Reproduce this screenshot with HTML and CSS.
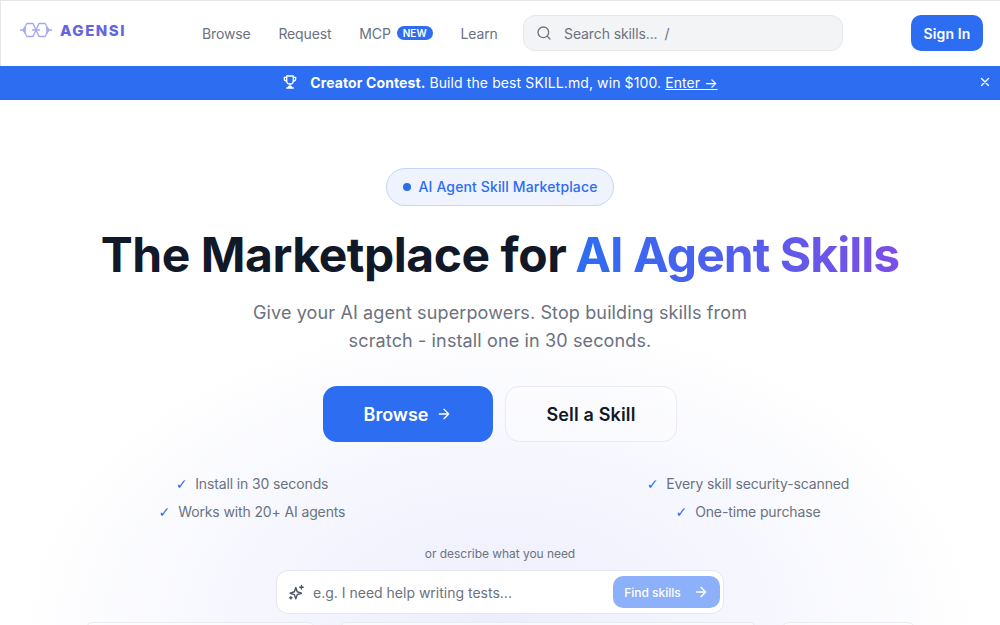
FILE: index.html
```html
<!DOCTYPE html>
<html lang="en">
<head>
  <meta charset="UTF-8" />
  <meta name="viewport" content="width=device-width, initial-scale=1.0"/>
  <title>Agensi - The Marketplace for AI Agent Skills</title>
  <link rel="stylesheet" href="styles.css">
</head>
<body>
  <header class="topbar">
    <a class="logo" href="#">
      <svg class="logo-mark" width="32" height="16" viewBox="0 0 32 16" fill="none" stroke="#a5a8f0" stroke-width="1.4" stroke-linejoin="round">
        <path d="M3 8 L7 1.500 H13 L16 8 L13 14.500 H7 Z"/>
        <path d="M16 8 L19 1.500 H25 L29 8 L25 14.500 H19 Z"/>
        <path d="M0 8 H6 M3 8 L6 5.500 M3 8 L6 10.500 M12 8 H20 M26 8 H32 M29 8 L26 5.500 M29 8 L26 10.500"/>
      </svg>
      <span>AGENSI</span>
    </a>
    <nav class="nav">
      <a href="#">Browse</a>
      <a href="#">Request</a>
      <a href="#" class="nav-mcp">MCP <span class="badge">NEW</span></a>
      <a href="#">Learn</a>
    </nav>
    <div class="search">
      <svg width="16" height="16" viewBox="0 0 24 24" fill="none" stroke="#6b7280" stroke-width="2" stroke-linecap="round">
        <circle cx="11" cy="11" r="8"/>
        <path d="M21 21l-4.300-4.300"/>
      </svg>
      <span class="search-text">Search skills...</span>
      <span class="search-key">/</span>
    </div>
    <button class="signin">Sign In</button>
  </header>

  <div class="banner">
    <svg width="16" height="16" viewBox="0 0 24 24" fill="none" stroke="#fff" stroke-width="2" stroke-linecap="round" stroke-linejoin="round">
      <path d="M7 3h10v7a5 5 0 0 1-10 0z"/>
      <path d="M7 5H3.500v2A3.500 3.500 0 0 0 7 10.500M17 5h3.500v2a3.500 3.500 0 0 1-3.500 3.500"/>
      <path d="M12 15v4M7 21h10M9 21l1-2h4l1 2"/>
    </svg>
    <p><b>Creator Contest.</b> Build the best SKILL.md, win $100. <a href="#">Enter →</a></p>
    <svg class="banner-close" width="12" height="12" viewBox="0 0 12 12" stroke="#fff" stroke-width="1.400" stroke-linecap="round">
      <path d="M2.500 2.500l7 7M9.500 2.500l-7 7"/>
    </svg>
  </div>

  <main class="hero">
    <div class="pill"><i class="dot"></i><span>AI Agent Skill Marketplace</span></div>
    <h1>The Marketplace for <span class="grad">AI Agent Skills</span></h1>
    <p class="lead">Give your AI agent superpowers. Stop building skills from<br>scratch - install one in 30 seconds.</p>
    <div class="actions">
      <a class="btn btn-primary" href="#">Browse
        <svg width="16" height="16" viewBox="0 0 24 24" fill="none" stroke="#fff" stroke-width="2" stroke-linecap="round" stroke-linejoin="round"><path d="M5 12h14M12 5l7 7-7 7"/></svg>
      </a>
      <a class="btn btn-ghost" href="#">Sell a Skill</a>
    </div>
    <ul class="features">
      <li><span class="check">✓</span>Install in 30 seconds</li>
      <li><span class="check">✓</span>Every skill security-scanned</li>
      <li><span class="check">✓</span>Works with 20+ AI agents</li>
      <li><span class="check">✓</span>One-time purchase</li>
    </ul>
    <p class="describe">or describe what you need</p>
    <div class="ask">
      <svg width="17" height="17" viewBox="0 0 24 24" fill="none" stroke="#4b5563" stroke-width="2" stroke-linecap="round" stroke-linejoin="round">
        <path d="M11 5l2 6 6 2-6 2-2 6-2-6-6-2 6-2z"/>
        <path d="M19 2v5M16.500 4.500h5M4 18v3M2.500 19.500h3"/>
      </svg>
      <span class="ask-text">e.g. I need help writing tests...</span>
      <button class="ask-btn">Find skills
        <svg width="16" height="16" viewBox="0 0 24 24" fill="none" stroke="#fff" stroke-width="2" stroke-linecap="round" stroke-linejoin="round"><path d="M5 12h14M12 5l7 7-7 7"/></svg>
      </button>
    </div>
    <div class="peek">
      <div class="peek-card"></div>
      <div class="peek-card"></div>
      <div class="peek-card"></div>
    </div>
  </main>
</body>
</html>
```
FILE: styles.css
```css
* {
  box-sizing: border-box;
  margin: 0;
  padding: 0;
}
html, body {
  height: 625px;
  overflow: hidden;
}
body {
  background-color: #fff;
  color: #111827;
  font-family: Inter, "Liberation Sans", sans-serif;
}
a {
  color: inherit;
  text-decoration: none;
}
.topbar {
  height: 66px;
  display: flex;
  align-items: center;
  padding: 0 17px 0 20px;
  background-color: #fff;
  box-shadow: inset 1px 1px 0 #e5e7eb;
}
.logo {
  width: 182px;
  display: flex;
  align-items: center;
  gap: 8px;
  margin-bottom: 6px;
  color: #6366e0;
  font-size: 15px;
  font-weight: 800;
  letter-spacing: 1.5px;
}
.nav {
  width: 321px;
  display: flex;
  align-items: center;
  gap: 28px;
  font-size: 14px;
  letter-spacing: -0.15px;
  color: #6b7280;
}
.nav-mcp {
  display: flex;
  align-items: center;
  gap: 6px;
}
.badge {
  background-color: #2c6df1;
  color: #fff;
  font-size: 10px;
  font-weight: 600;
  letter-spacing: 0;
  padding: 1px 6px;
  border-radius: 8px;
  line-height: 12px;
}
.search {
  width: 320px;
  height: 36px;
  display: flex;
  align-items: center;
  padding: 0 12px;
  background-color: #f3f4f6;
  border: 1px solid #e5e7eb;
  border-radius: 12px;
  font-size: 14px;
  letter-spacing: -0.1px;
  color: #6b7280;
}
.search-text {
  margin-left: 12px;
}
.search-key {
  margin-left: 7px;
}
.signin {
  margin-left: auto;
  width: 72px;
  height: 36px;
  background-color: #2c6df1;
  color: #fff;
  border: none;
  border-radius: 10px;
  font-family: inherit;
  font-size: 14px;
  font-weight: 600;
  letter-spacing: 0.15px;
}
.banner {
  position: relative;
  height: 34px;
  display: flex;
  align-items: center;
  justify-content: center;
  gap: 12px;
  padding-bottom: 2px;
  background-color: #2c6df1;
  color: #fff;
  font-size: 14px;
  letter-spacing: 0.1px;
}
.banner b {
  font-weight: 700;
}
.banner a {
  text-decoration: underline;
}
.banner-close {
  position: absolute;
  right: 9px;
  top: 10px;
}
.hero {
  height: 525px;
  display: flex;
  flex-direction: column;
  align-items: center;
  padding-top: 68px;
  overflow: hidden;
  background: radial-gradient(ellipse 480px 310px at 50% 100%, #edeefd 0%, #f5f6fe 50%, #fff 100%);
}
.pill {
  height: 38px;
  flex-shrink: 0;
  display: flex;
  align-items: center;
  gap: 8px;
  padding: 0 16px;
  background-color: #eff3fe;
  border: 1px solid #c7d5f8;
  border-radius: 19px;
  color: #2c6df1;
  font-size: 14px;
  font-weight: 500;
  letter-spacing: 0.13px;
}
.pill span {
  margin-bottom: 1px;
}
.dot {
  width: 8px;
  height: 8px;
  border-radius: 50%;
  background-color: #2c6df1;
}
h1 {
  margin-top: 20px;
  font-size: 48px;
  line-height: 58px;
  font-weight: 700;
  letter-spacing: -0.45px;
  color: #111827;
  white-space: nowrap;
}
.grad {
  margin-left: -2px;
  letter-spacing: -0.95px;
  background: linear-gradient(90deg, #2c6df1, #7c4fe6);
  -webkit-background-clip: text;
  background-clip: text;
  color: transparent;
}
.lead {
  margin-top: 15px;
  font-size: 18px;
  line-height: 28px;
  letter-spacing: 0.13px;
  color: #6b7280;
  text-align: center;
}
.actions {
  margin-top: 31px;
  display: flex;
  gap: 12px;
}
.btn {
  height: 56px;
  display: flex;
  align-items: center;
  justify-content: center;
  gap: 8px;
  border-radius: 14px;
  font-size: 18px;
  font-weight: 600;
}
.btn-primary {
  width: 170px;
  background-color: #2c6df1;
  color: #fff;
}
.btn-ghost {
  width: 172px;
  background-color: rgba(255, 255, 255, 0.3);
  border: 1px solid #e9eaf2;
  color: #111827;
  letter-spacing: 0.15px;
}
.features {
  margin-top: 32px;
  width: 992px;
  flex-shrink: 0;
  display: grid;
  grid-template-columns: 1fr 1fr;
  row-gap: 8px;
  list-style: none;
  font-size: 14px;
  line-height: 20px;
  letter-spacing: -0.13px;
  color: #6b7280;
  text-align: center;
}
.check {
  font-family: "DejaVu Sans", sans-serif;
  color: #2c6df1;
  margin-right: 8px;
}
.describe {
  margin-top: 24px;
  font-size: 12px;
  line-height: 16px;
  letter-spacing: -0.05px;
  color: #6b7280;
}
.ask {
  margin-top: 8px;
  width: 448px;
  height: 44px;
  flex-shrink: 0;
  display: flex;
  align-items: center;
  padding: 0 3px 0 11px;
  background-color: #fff;
  border: 1px solid #e5e7eb;
  border-radius: 12px;
}
.ask-text {
  margin-left: 8px;
  font-size: 14px;
  color: #6b7280;
}
.ask-btn {
  margin-left: auto;
  width: 107px;
  height: 32px;
  display: flex;
  align-items: center;
  justify-content: center;
  gap: 12px;
  background-color: #8db0fa;
  color: #fff;
  border: none;
  border-radius: 10px;
  font-family: inherit;
  font-size: 12px;
  font-weight: 500;
}
.peek {
  margin-top: 8px;
  width: 831px;
  flex-shrink: 0;
  display: grid;
  grid-template-columns: 231px 418px 135px;
  justify-content: space-between;
}
.peek-card {
  height: 40px;
  background-color: rgba(255, 255, 255, 0.6);
  border: 1px solid #e9ebf3;
  border-radius: 8px;
}
```
